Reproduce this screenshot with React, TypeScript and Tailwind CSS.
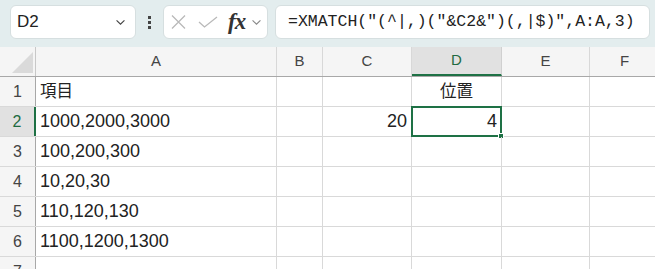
import React from "react";

const cols = [
  { name: "A", w: 241 },
  { name: "B", w: 46 },
  { name: "C", w: 89 },
  { name: "D", w: 90 },
  { name: "E", w: 88 },
  { name: "F", w: 70 },
];

const colA = ["項目", "1000,2000,3000", "100,200,300", "10,20,30", "110,120,130", "1100,1200,1300", ""];

const Chevron = ({ className }: { className?: string }) => (
  <svg className={className} viewBox="0 0 12 8" fill="none" stroke="currentColor" strokeWidth="1.3">
    <path d="M1.5 1.5 L6 6 L10.5 1.5" />
  </svg>
);

export default function App() {
  return (
    <div className="w-[655px] h-[269px] overflow-hidden bg-white font-['Liberation_Sans','Noto_Sans_CJK_JP',sans-serif]">
      {/* toolbar */}
      <div className="h-[47px] bg-[#e3edee] flex items-start pt-[5px] pl-[10px]">
        <div className="w-[126px] h-[34px] bg-white rounded-[6px] border border-[#d6dfe0] flex items-center pl-[6px] pr-[9px]">
          <span className="text-[17px] text-[#222] flex-1">D2</span>
          <Chevron className="w-[11px] h-[7px] text-[#444]" />
        </div>
        <div className="w-[27px] h-[34px] flex flex-col items-center justify-center gap-[2px]">
          <span className="w-[3px] h-[3px] bg-[#444]" />
          <span className="w-[3px] h-[3px] bg-[#444]" />
          <span className="w-[3px] h-[3px] bg-[#444]" />
        </div>
        <div className="w-[105px] h-[34px] bg-white rounded-[6px] border border-[#d6dfe0] flex items-center pl-[7px]">
          <svg className="w-[15px] h-[14px] text-[#b9b9b9]" viewBox="0 0 15 14" fill="none" stroke="currentColor" strokeWidth="1.3">
            <path d="M1 0.5 L14 13.5 M14 0.5 L1 13.5" />
          </svg>
          <svg className="w-[20px] h-[12px] ml-[12px] text-[#b9b9b9]" viewBox="0 0 20 12" fill="none" stroke="currentColor" strokeWidth="1.3">
            <path d="M1 6 L6.5 11 L19 1" />
          </svg>
          <span className="ml-[10px] text-[23px] italic font-bold font-['Liberation_Serif',serif] text-[#333] leading-none tracking-[-1px] pb-[2px]">fx</span>
          <Chevron className="ml-[6px] w-[11px] h-[7px] text-[#888]" />
        </div>
        <div className="ml-[7px] w-[375px] h-[34px] bg-white rounded-[6px] border border-[#d6dfe0] flex items-center pl-[12px]">
          <span className="font-['Liberation_Mono',monospace] text-[16.5px] text-[#222] whitespace-pre">
            =XMATCH("(^|,)("&amp;C2&amp;")(,|$)",A:A,3)
          </span>
        </div>
      </div>

      {/* header row */}
      <div className="flex h-[30px] bg-[#f5f5f5] border-b border-[#a8a8a8]">
        <div className="w-[36px] shrink-0 border-r border-[#c8c8c8] relative">
          <svg className="absolute left-[12px] top-[5px] w-[21px] h-[21px]" viewBox="0 0 21 21">
            <path d="M0 21 L21 21 L21 0 Z" fill="#dadada" />
          </svg>
        </div>
        {cols.map((c) => (
          <div
            key={c.name}
            style={{ width: c.w }}
            className={
              c.name === "D"
                ? "shrink-0 flex items-center justify-center text-[15px] text-[#1e6b41] bg-[#e1e1e1] border-r border-[#d0d0d0] border-b-2 border-b-[#1e7145]"
                : "shrink-0 flex items-center justify-center text-[15px] text-[#444] border-r border-[#d8d8d8]"
            }
          >
            {c.name}
          </div>
        ))}
      </div>

      {/* rows */}
      {colA.map((a, i) => {
        const r = i + 1;
        const sel = r === 2;
        return (
          <div key={r} className="flex h-[30px] border-b border-[#d9d9d9]">
            <div
              className={
                sel
                  ? "w-[36px] shrink-0 flex items-center justify-center text-[16px] text-[#1e6b41] bg-[#e1e1e1] border-r-2 border-[#1e7145]"
                  : "w-[36px] shrink-0 flex items-center justify-center text-[16px] text-[#444] bg-[#f5f5f5] border-r border-[#a8a8a8]"
              }
            >
              {r}
            </div>
            <div className={`w-[241px] shrink-0 flex items-center pl-[4px] text-[#222] border-r border-[#d9d9d9] ${r === 1 ? "text-[16.5px]" : "text-[18px]"}`}>
              {a}
            </div>
            <div className="w-[46px] shrink-0 border-r border-[#d9d9d9]" />
            <div className="w-[89px] shrink-0 flex items-center justify-end pr-[4px] text-[18px] text-[#222] border-r border-[#d9d9d9]">
              {sel ? "20" : ""}
            </div>
            <div className="w-[90px] shrink-0 border-r border-[#d9d9d9] relative flex items-center justify-center text-[16.5px] text-[#222]">
              {r === 1 && "位置"}
              {sel && (
                <div className="absolute left-[-1px] top-[-1px] w-[91px] h-[31px] border-2 border-[#1e7145] flex items-center justify-end pr-[3px] text-[18px]">
                  4
                  <span className="absolute right-[-4px] bottom-[-4px] w-[6px] h-[6px] bg-[#1e7145] border border-white" />
                </div>
              )}
            </div>
            <div className="w-[88px] shrink-0 border-r border-[#d9d9d9]" />
            <div className="w-[70px] shrink-0" />
          </div>
        );
      })}
    </div>
  );
}
